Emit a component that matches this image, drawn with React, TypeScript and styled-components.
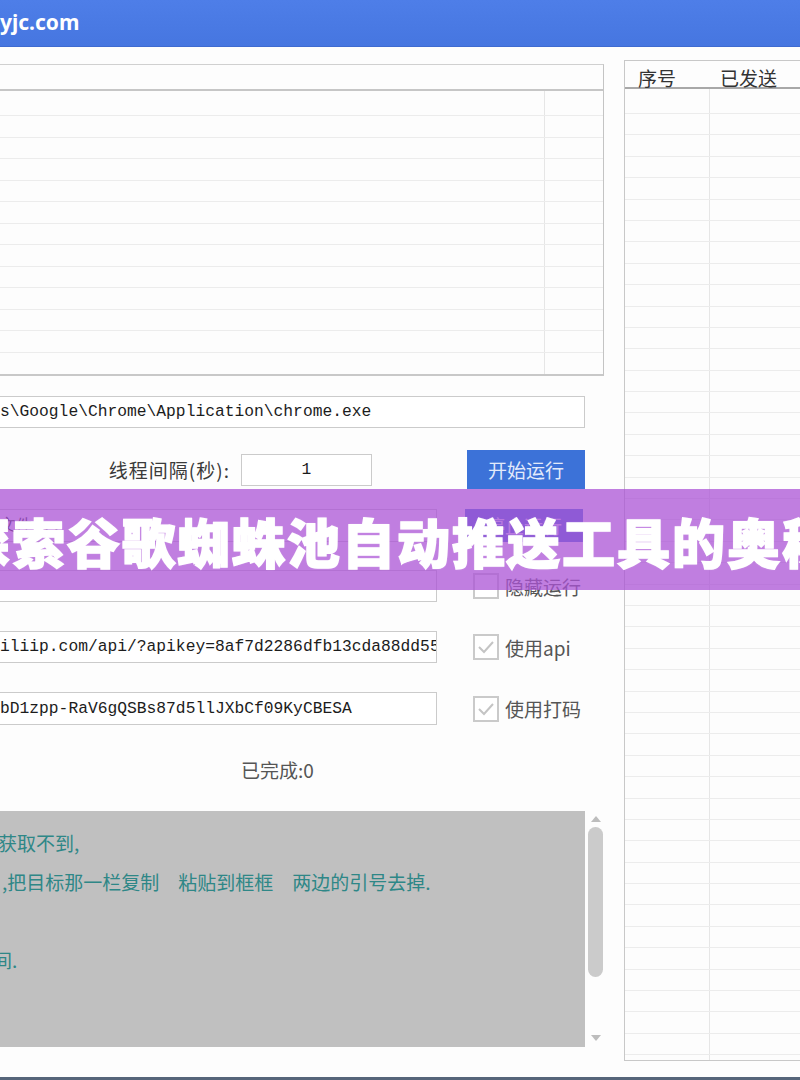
import React from 'react';
import styled, { createGlobalStyle } from 'styled-components';

const GlobalStyle = createGlobalStyle`
  html, body {
    margin: 0;
    padding: 0;
    background: #fdfdfd;
  }
  body {
    font-family: "Noto Sans CJK SC", "Noto Sans", sans-serif;
    overflow: hidden;
  }
  * {
    box-sizing: border-box;
  }
`;

const Window = styled.div`
  position: relative;
  width: 800px;
  height: 1080px;
  overflow: hidden;
  display: flex;
  flex-direction: column;
  background: #fdfdfd;
`;

const TitleBar = styled.div`
  height: 47px;
  flex-shrink: 0;
  display: flex;
  align-items: center;
  background: linear-gradient(#4e7ee8, #4676e0);
  border-bottom: 1px solid #3f6bd0;
  color: #fff;
  font-family: "Noto Sans", "Noto Sans CJK SC", sans-serif;
  font-weight: 700;
  font-size: 21px;
  padding-bottom: 2px;
  white-space: nowrap;
`;

const Body = styled.div`
  flex: 1;
  display: flex;
  align-items: flex-start;
  padding-top: 13px;
  border-bottom: 3px solid #56657a;
`;

const LeftPane = styled.div`
  width: 604px;
  flex-shrink: 0;
  display: flex;
  flex-direction: column;
  padding-top: 4px;
`;

/* ---- grid tables ---- */

const Grid = styled.div`
  width: 604px;
  border-top: 1px solid #d0d0d0;
  border-right: 1px solid #c4c4c4;
  border-bottom: 2px solid #c8c8c8;
`;

const GridHeader = styled.div`
  height: 26px;
  border-bottom: 2px solid #c6c6c6;
`;

const GridRow = styled.div<{ $h: number; $col: number }>`
  display: grid;
  grid-template-columns: ${p => p.$col}px 1fr;
  height: ${p => p.$h}px;
  border-bottom: 1px solid #ececec;
  &:last-child {
    border-bottom: none;
  }
`;

const GridCell = styled.div`
  border-right: 1px solid #e6e6e6;
`;

const RightPane = styled.div`
  margin-left: 20px;
  flex-shrink: 0;
  width: 280px;
  height: 1001px;
  border: 1px solid #c8c8c8;
  border-right: none;
  overflow: hidden;
`;

const ListHeader = styled.div`
  display: grid;
  grid-template-columns: 85px 1fr;
  height: 28px;
  border-bottom: 2px solid #a8a8a8;
  font-size: 19px;
  line-height: 19px;
  color: #333;
`;

const HeadCell = styled.div<{ $pad: number }>`
  padding-top: 7px;
  padding-left: ${p => p.$pad}px;
`;

/* ---- inputs ---- */

const Field = styled.div<{ $w: number; $h?: number; $center?: boolean }>`
  width: ${p => p.$w}px;
  height: ${p => p.$h ?? 32}px;
  flex-shrink: 0;
  border: 1px solid #cbcbcb;
  border-left: ${p => (p.$center ? '1px solid #cbcbcb' : 'none')};
  background: #fff;
  font-family: "Liberation Mono", "DejaVu Sans Mono", monospace;
  font-size: 16.3px;
  line-height: ${p => (p.$h ?? 32) - 2}px;
  color: #1c1c1c;
  white-space: nowrap;
  overflow: hidden;
  text-align: ${p => (p.$center ? 'center' : 'left')};
`;

const FormRow = styled.div<{ $top: number; $h: number }>`
  display: flex;
  align-items: center;
  margin-top: ${p => p.$top}px;
  height: ${p => p.$h}px;
`;

const Label = styled.div`
  width: 230px;
  margin-right: 11px;
  text-align: right;
  font-size: 19px;
  letter-spacing: 1px;
  color: #3a3a3a;
`;

const Button = styled.button<{ $gap: number; $h: number }>`
  margin-left: ${p => p.$gap}px;
  width: 118px;
  height: ${p => p.$h}px;
  border: none;
  padding: 0;
  background: #3c72d8;
  color: #e2eafb;
  font-family: "Noto Sans CJK SC", sans-serif;
  font-size: 19px;
`;

const Check = styled.div`
  margin-left: 36px;
  width: 26px;
  height: 26px;
  border: 2px solid #cacaca;
  background: #fff;
  display: flex;
  align-items: center;
  justify-content: center;
`;

const CheckLabel = styled.span`
  margin-left: 6px;
  font-size: 19px;
  color: #555;
`;

const Status = styled.div`
  margin-top: 31px;
  height: 28px;
  line-height: 28px;
  padding-left: 241px;
  font-size: 19px;
  color: #555;
`;

/* ---- log area ---- */

const Log = styled.div`
  margin-top: 27px;
  height: 236px;
  display: flex;
`;

const LogText = styled.div`
  width: 585px;
  background: #c0c0c0;
  padding-top: 12px;
  overflow: hidden;
`;

const LogLine = styled.div<{ $indent: number }>`
  height: 39px;
  line-height: 39px;
  font-size: 19px;
  color: #2e8787;
  white-space: pre;
  text-indent: ${p => p.$indent}px;
`;

const Scroll = styled.div`
  width: 19px;
  display: flex;
  flex-direction: column;
  align-items: center;
  padding: 5px 0 6px 2px;
`;

const Arrow = styled.div<{ $down?: boolean }>`
  width: 0;
  height: 0;
  border-left: 5px solid transparent;
  border-right: 5px solid transparent;
  ${p => (p.$down ? 'border-top: 6px solid #bdbdbd;' : 'border-bottom: 6px solid #bdbdbd;')}
`;

const Thumb = styled.div`
  margin-top: 5px;
  width: 15px;
  height: 150px;
  border-radius: 8px;
  background: #cbcbcb;
`;

const Spacer = styled.div`
  flex: 1;
`;

/* ---- overlay banner ---- */

const Banner = styled.div`
  position: absolute;
  top: 489px;
  left: 0;
  width: 800px;
  height: 101px;
  padding-top: 4px;
  background: rgba(171, 83, 214, 0.75);
  overflow: hidden;
  white-space: nowrap;
  color: #fff;
  font-family: "Noto Sans CJK SC", sans-serif;
  font-weight: 900;
  font-size: 53px;
  line-height: 97px;
  letter-spacing: 2px;
  text-indent: -43px;
  -webkit-text-stroke: 1.5px #fff;
  text-shadow: 0 0 2px rgba(255, 255, 255, 0.6);
`;

const CheckMark = () => (
  <svg width="20" height="20" viewBox="0 0 20 20">
    <polyline points="3,10 8,15 17,5" fill="none" stroke="#c4c4c4" strokeWidth="2" />
  </svg>
);

const CheckBox: React.FC<{ checked?: boolean; label: string }> = ({ checked, label }) => (
  <>
    <Check>{checked && <CheckMark />}</Check>
    <CheckLabel>{label}</CheckLabel>
  </>
);

const leftRows = Array.from({ length: 13 }, (_, i) => (i === 0 ? 25 : 21.5));
const rightRows = Array.from({ length: 46 }, (_, i) => (i === 0 ? 25 : 21.4));

export default function App() {
  return (
    <Window>
      <GlobalStyle />
      <TitleBar>yjc.com</TitleBar>
      <Body>
        <LeftPane>
          <Grid>
            <GridHeader />
            {leftRows.map((h, i) => (
              <GridRow key={i} $h={h} $col={545}>
                <GridCell />
                <div />
              </GridRow>
            ))}
          </Grid>

          <FormRow $top={20} $h={32}>
            <Field $w={585}>s\Google\Chrome\Application\chrome.exe</Field>
          </FormRow>

          <FormRow $top={22} $h={39}>
            <Label>线程间隔(秒):</Label>
            <Field $w={131} $center>1</Field>
            <Button $gap={95} $h={39}>开始运行</Button>
          </FormRow>

          <FormRow $top={20} $h={33}>
            <Field $w={437} $h={33}>        文件    ..</Field>
            <Button $gap={28} $h={33}>停止运行</Button>
          </FormRow>

          <FormRow $top={28} $h={32}>
            <Field $w={437} />
            <CheckBox label="隐藏运行" />
          </FormRow>

          <FormRow $top={29} $h={32}>
            <Field $w={437}>iliip.com/api/?apikey=8af7d2286dfb13cda88dd55</Field>
            <CheckBox checked label="使用api" />
          </FormRow>

          <FormRow $top={29} $h={33}>
            <Field $w={437} $h={33}>bD1zpp-RaV6gQSBs87d5llJXbCf09KyCBESA</Field>
            <CheckBox checked label="使用打码" />
          </FormRow>

          <Status>已完成:0</Status>

          <Log>
            <LogText>
              <LogLine $indent={-2}>获取不到,</LogLine>
              <LogLine $indent={2}>{',把目标那一栏复制\u3000粘贴到框框\u3000两边的引号去掉.'}</LogLine>
              <LogLine $indent={0} />
              <LogLine $indent={-7}>间.</LogLine>
            </LogText>
            <Scroll>
              <Arrow />
              <Thumb />
              <Spacer />
              <Arrow $down />
            </Scroll>
          </Log>
        </LeftPane>

        <RightPane>
          <ListHeader>
            <HeadCell $pad={13}>序号</HeadCell>
            <HeadCell $pad={10}>已发送</HeadCell>
          </ListHeader>
          {rightRows.map((h, i) => (
            <GridRow key={i} $h={h} $col={85}>
              <GridCell />
              <div />
            </GridRow>
          ))}
        </RightPane>
      </Body>
      <Banner>探索谷歌蜘蛛池自动推送工具的奥秘</Banner>
    </Window>
  );
}
